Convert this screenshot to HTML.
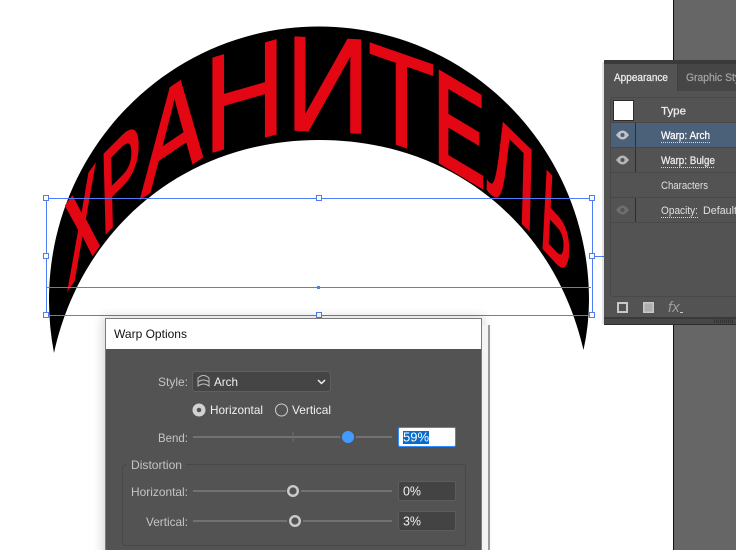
<!DOCTYPE html>
<html><head><meta charset="utf-8"><style>
html,body{margin:0;padding:0;background:#fff;width:736px;height:550px;overflow:hidden}
svg{display:block}
text{font-family:"Liberation Sans",sans-serif;font-size:12px}
.l{fill:#c4c4c4}.v{fill:#f0f0f0}
.p{fill:#ededed;font-size:11px;stroke:#ededed;stroke-width:.25}
.w{font-size:100px;fill:#e30613;stroke:#e30613}
</style></head><body>
<svg width="736" height="550" viewBox="0 0 736 550" xmlns="http://www.w3.org/2000/svg">
<defs><filter id="b" x="-10%" y="-10%" width="120%" height="120%"><feGaussianBlur stdDeviation="5"/></filter></defs>
<rect width="736" height="550" fill="#fff"/>
<!-- right column -->
<rect x="673" y="0" width="63" height="550" fill="#666"/>
<rect x="673" y="0" width="1" height="550" fill="#111"/>
<!-- arch -->
<path d="M54 353Q49 327 49 300C49 148.900 169.900 26.500 319 26.500C468.100 26.500 589 148.900 589 300Q589 325 583.500 350C554.700 225.200 453 140 319 140C185 140 81.400 227.900 54 353Z" fill="#000"/>
<!-- warped letters -->
<text class="w" style="stroke-width:5" transform="matrix(.456 -.638 .0436 1.150 68.300 287.300)">Х</text>
<text class="w" style="stroke-width:2.500" transform="matrix(.620 -.620 .029 1.134 101.200 237.500)">Р</text>
<text class="w" style="stroke-width:2" transform="matrix(.920 -.618 -.051 1.344 140.800 198.100)">А</text>
<text class="w" style="stroke-width:1" transform="matrix(1.129 -.323 0 1.366 203.700 154.600)">Н</text>
<text class="w" style="stroke-width:1" transform="matrix(1.183 .054 0 1.352 285.300 129.600)">И</text>
<text class="w" style="stroke-width:1" transform="matrix(1.105 .386 0 1.337 367.700 134.200)">Т</text>
<text class="w" style="stroke-width:3" transform="matrix(.776 .462 0 1.308 433.600 158.200)">Е</text>
<text class="w" style="stroke-width:1.500" transform="matrix(.742 .726 -.029 1.163 486.500 188.500)">Л</text>
<text class="w" style="stroke-width:3" transform="matrix(.460 .500 -.058 1.105 539.500 243.900)">Ь</text>
<!-- selection -->
<g fill="none" stroke="#4f7df5" stroke-width="1">
<rect x="46.500" y="198.500" width="546" height="117"/>
<path d="M47 287.500H591M592 256.500H604"/>
<g fill="#fff">
<rect x="43.500" y="195.500" width="5" height="5"/><rect x="316.500" y="195.500" width="5" height="5"/><rect x="589.500" y="195.500" width="5" height="5"/>
<rect x="43.500" y="253.500" width="5" height="5"/><rect x="589.500" y="253.500" width="5" height="5"/>
<rect x="43.500" y="312.500" width="5" height="5"/><rect x="316.500" y="312.500" width="5" height="5"/><rect x="589.500" y="312.500" width="5" height="5"/>
</g></g>
<rect x="317" y="286" width="3" height="3" fill="#4f7df5"/>
<!-- panel -->
<rect x="602" y="62" width="4" height="262" fill="#000" opacity=".1"/>
<rect x="604" y="60" width="132" height="265" fill="#535353"/>
<rect x="604" y="60" width="132" height="4" fill="#3a3a3a"/>
<rect x="678" y="64" width="58" height="27" fill="#464646"/>
<rect x="677" y="64" width="1" height="27" fill="#3f3f3f"/>
<text x="614" y="81" class="p" textLength="54" lengthAdjust="spacingAndGlyphs">Appearance</text>
<text x="686" y="81" class="p" style="fill:#a2a2a2;stroke:#a2a2a2" textLength="54" lengthAdjust="spacingAndGlyphs">Graphic Sty</text>
<path d="M736 97.500H613q-2.500 0-2.500 2.500V294q0 2.500 2.500 2.500H736" fill="none" stroke="#484848"/>
<rect x="611" y="123" width="125" height="24" fill="#4b6079"/>
<path d="M611 122.500H736M611 147.500H736M611 172.500H736M611 197.500H736M611 222.500H736" stroke="#484848"/>
<rect x="613.500" y="100.500" width="20" height="20" fill="#fff" stroke="#2c2c2c"/>
<path d="M635.500 123V147M635.500 148V172M635.500 198V222" stroke="#2e2e2e"/>
<path d="M616 135q6.500-9 13 0q-6.500 9-13 0Z" fill="#c2c2c2"/>
<path d="M616 160q6.500-9 13 0q-6.500 9-13 0Z" fill="#b5b5b5"/>
<path d="M616 210q6.500-9 13 0q-6.500 9-13 0Z" fill="#6e6e6e"/>
<circle cx="622.500" cy="135" r="2" fill="#4b6079"/><circle cx="622.500" cy="160" r="2" fill="#535353"/><circle cx="622.500" cy="210" r="2" fill="#535353"/>
<text x="661" y="114.500" class="p" textLength="25" lengthAdjust="spacingAndGlyphs">Type</text>
<text x="661" y="139" class="p" style="fill:#fff;stroke:#fff" textLength="49" lengthAdjust="spacingAndGlyphs">Warp: Arch</text>
<text x="661" y="164" class="p" textLength="54" lengthAdjust="spacingAndGlyphs">Warp: Bulge</text>
<text x="661" y="189" class="p" style="fill:#e0e0e0;stroke:none" textLength="47" lengthAdjust="spacingAndGlyphs">Characters</text>
<text x="661" y="214" class="p" style="fill:#e0e0e0;stroke:none" textLength="37" lengthAdjust="spacingAndGlyphs">Opacity:</text>
<text x="703" y="214" class="p" style="fill:#e0e0e0;stroke:none" textLength="34" lengthAdjust="spacingAndGlyphs">Default</text>
<g stroke="#d8d8d8" stroke-dasharray="1 1" fill="none">
<path d="M661 142.500H710M661 167.500H715M661 217.500H698"/>
</g>
<rect x="618" y="303" width="9" height="9" fill="none" stroke="#c8c8c8" stroke-width="2"/>
<rect x="643.750" y="302.750" width="9.500" height="9.500" fill="#aeaeae" stroke="#c8c8c8" stroke-width="1.500"/>
<text x="668" y="312" style="font-style:italic;font-size:15px;fill:#9c9c9c">fx</text>
<rect x="680" y="312" width="3" height="1" fill="#ccc"/>
<rect x="604" y="317" width="132" height="2" fill="#3a3a3a"/>
<rect x="604" y="319" width="132" height="6" fill="#474747"/>
<rect x="604" y="324" width="132" height="1" fill="#2c2c2c"/>
<path d="M714.500 319.500V323M716.500 319.500V323M718.500 319.500V323M720.500 319.500V323M722.500 319.500V323M724.500 319.500V323M726.500 319.500V323M728.500 319.500V323M730.500 319.500V323M732.500 319.500V323" stroke="#333"/>
<!-- dialog shadow -->
<rect x="102" y="316" width="382" height="260" fill="#000" opacity=".14" filter="url(#b)"/>
<rect x="482" y="325" width="6" height="225" fill="#f4f4f4"/>
<rect x="488" y="325" width="2" height="225" fill="#9a9a9a"/>
<!-- dialog -->
<rect x="105" y="318" width="377" height="232" fill="#7b7b7b"/>
<rect x="106" y="319" width="375" height="30" fill="#fff"/>
<rect x="106" y="349" width="375" height="201" fill="#535353"/>
<text x="114" y="338" style="fill:#111" textLength="73" lengthAdjust="spacingAndGlyphs">Warp Options</text>
<text x="158" y="386" class="l" textLength="30" lengthAdjust="spacingAndGlyphs">Style:</text>
<rect x="192.500" y="371.500" width="138" height="20" rx="3" fill="#454545" stroke="#5f5f5f"/>
<path d="M198 378q5.500-5 11 0v8q-5.500-4-11 0ZM198 382q5.500-4 11 0" fill="none" stroke="#bdbdbd" stroke-width="1"/>
<text x="214" y="386" class="v" textLength="24" lengthAdjust="spacingAndGlyphs">Arch</text>
<path d="M318 380l3.500 3.500l3.500-3.500" fill="none" stroke="#eee" stroke-width="1.500"/>
<circle cx="199" cy="410" r="6.500" fill="#d2d2d2"/><circle cx="199" cy="410" r="2.300" fill="#535353"/>
<text x="210" y="414" class="v" textLength="53" lengthAdjust="spacingAndGlyphs">Horizontal</text>
<circle cx="281.500" cy="410" r="6" fill="none" stroke="#cfcfcf"/>
<text x="292" y="414" class="v" textLength="39" lengthAdjust="spacingAndGlyphs">Vertical</text>
<text x="158" y="442" class="l" textLength="30" lengthAdjust="spacingAndGlyphs">Bend:</text>
<path d="M193 437H340M356 437H392" stroke="#727272" stroke-width="2"/>
<rect x="292.500" y="432" width="1" height="10" fill="#6c6c6c"/>
<circle cx="348" cy="437" r="6" fill="#429cff"/>
<rect x="398.500" y="427.500" width="57" height="19" rx="1.500" fill="#fff" stroke="#2f8fff"/>
<rect x="403" y="431" width="26" height="13" fill="#0a6bc8"/>
<text x="403" y="441.500" style="fill:#fff;font-size:13px" textLength="26" lengthAdjust="spacingAndGlyphs">59%</text>
<rect x="122.500" y="464.500" width="343" height="81" rx="3" fill="none" stroke="#484848"/>
<rect x="126" y="458" width="60" height="14" fill="#535353"/>
<text x="131" y="469" class="l" textLength="51" lengthAdjust="spacingAndGlyphs">Distortion</text>
<text x="131" y="496" class="l" textLength="57" lengthAdjust="spacingAndGlyphs">Horizontal:</text>
<path d="M193 491H286M301 491H392" stroke="#727272" stroke-width="2"/>
<circle cx="293" cy="491" r="4.800" fill="#535353" stroke="#cacaca" stroke-width="2.400"/>
<rect x="398.500" y="481.500" width="57" height="19" rx="2" fill="#434343" stroke="#5d5d5d"/>
<text x="403" y="495.500" class="v" style="font-size:13px" textLength="18" lengthAdjust="spacingAndGlyphs">0%</text>
<text x="146" y="526" class="l" textLength="42" lengthAdjust="spacingAndGlyphs">Vertical:</text>
<path d="M193 521H287M303 521H392" stroke="#727272" stroke-width="2"/>
<circle cx="295" cy="521" r="4.800" fill="#535353" stroke="#cacaca" stroke-width="2.400"/>
<rect x="398.500" y="511.500" width="57" height="19" rx="2" fill="#434343" stroke="#5d5d5d"/>
<text x="403" y="525.500" class="v" style="font-size:13px" textLength="18" lengthAdjust="spacingAndGlyphs">3%</text>
</svg>
</body></html>
